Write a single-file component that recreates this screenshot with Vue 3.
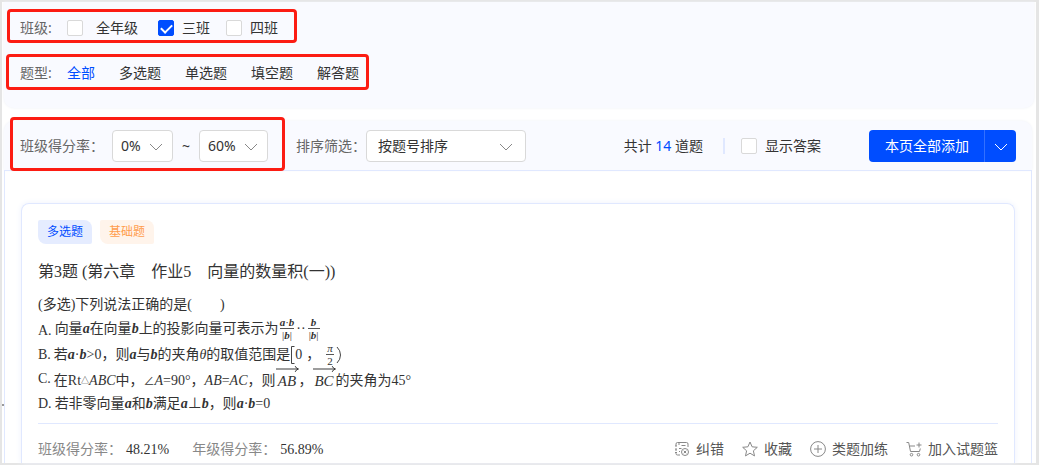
<script setup>
import { ref } from 'vue'

const classes = ref([
  { name: '全年级', checked: false },
  { name: '三班', checked: true },
  { name: '四班', checked: false },
])
const types = ['全部', '多选题', '单选题', '填空题', '解答题']
const activeType = ref('全部')
const minRate = ref('0%')
const maxRate = ref('60%')
const sort = ref('按题号排序')
const showAnswer = ref(false)
</script>

<template>
  <div class="frame">
    <section class="filters">
      <div class="row marked class-row">
        <span class="label">班级:</span>
        <label v-for="c in classes" :key="c.name" class="check">
          <input v-model="c.checked" type="checkbox" />
          <span>{{ c.name }}</span>
        </label>
      </div>
      <div class="row marked type-row">
        <span class="label">题型:</span>
        <button
          v-for="t in types"
          :key="t"
          type="button"
          class="type"
          :class="{ active: t === activeType }"
          @click="activeType = t"
        >{{ t }}</button>
      </div>
    </section>

    <section class="results">
      <div class="toolbar">
        <div class="marked rate-group">
          <label class="label" for="min-rate">班级得分率：</label>
          <span class="select rate-min">
            <select id="min-rate" v-model="minRate"><option>0%</option><option>20%</option></select>
            <svg viewBox="0 0 14 8"><path d="M1 1l6 6 6-6" /></svg>
          </span>
          <span class="tilde">~</span>
          <span class="select rate-max">
            <select v-model="maxRate" aria-label="最高得分率"><option>60%</option><option>80%</option></select>
            <svg viewBox="0 0 14 8"><path d="M1 1l6 6 6-6" /></svg>
          </span>
        </div>
        <label class="label" for="sort">排序筛选：</label>
        <span class="select sort">
          <select id="sort" v-model="sort"><option>按题号排序</option></select>
          <svg viewBox="0 0 14 8"><path d="M1 1l6 6 6-6" /></svg>
        </span>
        <div class="summary">
          <span class="total">共计 <b>14</b> 道题</span>
          <i class="split"></i>
          <label class="check"><input v-model="showAnswer" type="checkbox" /><span>显示答案</span></label>
        </div>
        <div class="add">
          <button type="button" class="add-all">本页全部添加</button>
          <button type="button" class="add-more" aria-label="更多">
            <svg viewBox="0 0 14 8"><path d="M1 1l6 6 6-6" /></svg>
          </button>
        </div>
      </div>

      <div class="list">
        <article class="card">
          <div class="tags">
            <span class="tag blue">多选题</span>
            <span class="tag orange">基础题</span>
          </div>
          <h2>第3题 (第六章　作业5　向量的数量积(一))</h2>
          <div class="question">
            <p class="stem">(多选)下列说法正确的是(　　)</p>
            <div class="option low">
              <span>A.</span>
              <p>向量<b>a</b>在向量<b>b</b>上的投影向量可表示为<span class="frac"><span><b>a</b>·<b>b</b></span><span class="den">|<b>b</b>|</span></span><span class="dots">··</span><span class="frac"><span><b>b</b></span><span class="den">|<b>b</b>|</span></span></p>
            </div>
            <div class="option tall">
              <span>B.</span>
              <p>若<b>a</b>·<b>b</b>&gt;0，则<b>a</b>与<b>b</b>的夹角<i>θ</i>的取值范围是<svg class="fence" viewBox="0 0 5 18"><path d="M4.500 .5H1.500V17.500H4.500" /></svg>0<span class="comma">，</span><span class="frac pi"><i>π</i><span class="den">2</span></span><svg class="fence" viewBox="0 0 5 18"><path d="M1 1Q4.500 4.500 4.500 9Q4.500 13.500 1 17" /></svg></p>
            </div>
            <div class="option high">
              <span>C.</span>
              <p>在Rt<small class="triangle">△</small><i>ABC</i>中，<small>∠</small><i>A</i>=90°，<i>AB</i>=<i>AC</i>，则<span class="vec"><svg viewBox="0 0 24 6"><path d="M0 3h23M20 0q1 2.500 3.500 3q-2.500 .5-3.500 3" /></svg><i>AB</i></span>，<span class="vec"><svg viewBox="0 0 24 6"><path d="M0 3h23M20 0q1 2.500 3.500 3q-2.500 .5-3.500 3" /></svg><i>BC</i></span>的夹角为45°</p>
            </div>
            <div class="option">
              <span>D.</span>
              <p>若非零向量<b>a</b>和<b>b</b>满足<b>a</b>⊥<b>b</b>，则<b>a</b>·<b>b</b>=0</p>
            </div>
          </div>
          <footer>
            <span class="stat">班级得分率：<em>48.21%</em></span>
            <span class="stat">年级得分率：<em>56.89%</em></span>
            <div class="actions">
              <button type="button">
                <svg viewBox="0 0 16 16"><path d="M6 14H3.500Q2 14 2 12.500V11M2 9V7M2 5V3Q2 1.500 3.500 1.500H12.500Q14 1.500 14 3V6M5 1.500V4M7.500 4.500H11.500M5 7.500H7.500M5 10.500H6M1 5H3M1 9H3M1 11.500H3" /><circle cx="11" cy="11" r="3.500" /><path d="M9.700 9.700l2.600 2.600M12.300 9.700l-2.600 2.600" /></svg>
                纠错
              </button>
              <button type="button">
                <svg viewBox="0 0 16 16"><path d="M8 1l2.100 4.800 5.200.5-3.900 3.500 1.100 5.100L8 12.200l-4.500 2.700 1.100-5.100L.7 6.300l5.200-.5z" /></svg>
                收藏
              </button>
              <button type="button">
                <svg viewBox="0 0 16 16"><circle cx="8" cy="8" r="7.400" /><path d="M8 4v8M4 8h8" /></svg>
                类题加练
              </button>
              <button type="button">
                <svg viewBox="0 0 16 16"><path d="M.5 1.500H2.700L4.500 10.500H13.500L14.300 7.500M3.500 5H9M10.500 4H15.500M13 1.500V6.500" /><circle cx="5.500" cy="13.700" r="1.300" /><circle cx="12.500" cy="13.700" r="1.300" /></svg>
                加入试题篮
              </button>
            </div>
          </footer>
        </article>
      </div>
    </section>
    <i class="handle"></i>
  </div>
</template>

<style>
body {
  background: #fff;
}
</style>

<style scoped>
* {
  box-sizing: border-box;
}
.frame {
  position: relative;
  min-height: 100vh;
  display: flex;
  flex-direction: column;
  gap: 13px;
  padding: 0 2px;
  border: 2px solid #e5e5e5;
  border-right-width: 3px;
  color: #333;
  font: 400 14px/20px "Noto Sans", "Noto Sans CJK SC", sans-serif;
}
.handle {
  position: absolute;
  left: 0;
  bottom: 57px;
  width: 2px;
  height: 2px;
  background: #999;
  box-shadow: 0 0 12px #ccc;
}
button,
select {
  font: inherit;
  color: inherit;
  margin: 0;
  border: 0;
  background: none;
}
button {
  padding: 0;
  cursor: pointer;
}
svg {
  fill: none;
  stroke: #888;
}
.label {
  color: #666;
}
.filters {
  display: flex;
  flex-direction: column;
  align-items: flex-start;
  gap: 11px;
  padding: 7px 2px 18px;
  background: #f9faff;
  border-radius: 0 0 10px 10px;
  box-shadow: 0 0 3px #eef0f6;
}
.row {
  display: flex;
  align-items: center;
}
.marked {
  position: relative;
}
.marked::after {
  content: "";
  position: absolute;
  inset: 0;
  border: 3px solid #fc1c13;
  border-radius: 4px;
  pointer-events: none;
}
.class-row {
  height: 34px;
  margin-left: 1px;
  padding: 4px 19px 0 13px;
}
.type-row {
  height: 36px;
  gap: 24px;
  padding: 2px 10px 0 14px;
}
.row .label {
  width: 47px;
}
.type-row .label {
  margin-right: -24px;
}
.check {
  display: flex;
  align-items: center;
  gap: 8px;
}
.class-row .check:nth-child(2) {
  gap: 13px;
  margin-right: 20px;
}
.class-row .check:nth-child(3) {
  margin-right: 16px;
}
.check input {
  appearance: none;
  width: 16px;
  height: 16px;
  margin: 0;
  border: 1px solid #d9d9d9;
  border-radius: 2px;
  background: #fff;
  display: grid;
  place-items: center;
}
.check input:checked {
  border-color: #004dff;
  background: #004dff;
}
.check input:checked::after {
  content: "";
  width: 9px;
  height: 5px;
  border: solid #fff;
  border-width: 0 0 2px 2px;
  transform: translateY(-1px) rotate(-45deg);
}
.type.active,
.total b {
  color: #004dff;
}
.results {
  flex: 1;
  display: flex;
  flex-direction: column;
  margin-right: 2px;
}
.toolbar {
  display: flex;
  align-items: center;
  height: 49px;
  padding: 1px 16px 0 0;
  background: #f9faff;
  border-radius: 10px 10px 0 0;
  box-shadow: 0 0 3px #eef0f6;
}
.rate-group {
  display: flex;
  align-items: center;
  height: 54px;
  margin: 0 11px 4px 6px;
  padding: 4px 17px 0 10px;
}
.rate-group .label {
  margin-right: 8px;
}
.tilde {
  width: 26px;
  text-align: center;
}
.select {
  display: grid;
  align-items: center;
}
.select select,
.select svg {
  grid-area: 1 / 1;
}
.select select {
  appearance: none;
  width: 100%;
  height: 32px;
  padding: 0 8px;
  border: 1px solid #d9d9d9;
  border-radius: 4px;
  background: #fff;
}
.select svg {
  width: 14px;
  height: 8px;
  margin: 2px 10px 0 0;
  justify-self: end;
  pointer-events: none;
}
.rate-min {
  width: 61px;
}
.rate-max {
  width: 69px;
}
.sort {
  width: 160px;
}
.sort select {
  padding: 0 11px;
}
.sort svg {
  margin-right: 13px;
}
.summary {
  display: flex;
  align-items: center;
  margin-left: auto;
}
.total b {
  font-weight: 400;
}
.split {
  width: 2px;
  height: 16px;
  margin: 0 16px 0 20px;
  background: #e0e8ff;
}
.add {
  display: flex;
  height: 32px;
  margin-left: 48px;
  border-radius: 4px;
  background: #004dff;
  color: #fff;
}
.add-all {
  padding: 0 15px 0 16px;
}
.add-more {
  width: 32px;
  border-left: 1px solid #3370ff;
}
.add-more svg {
  width: 14px;
  height: 8px;
  stroke: #fff;
}
.list {
  flex: 1;
  display: flex;
  flex-direction: column;
  padding: 32px 16px 0;
  border: 1px solid #e0e8ff;
  border-bottom: 0;
}
.card {
  flex: 1;
  padding: 16px 16px 0;
  border: 1px solid #e0e8ff;
  border-bottom: 0;
  border-radius: 8px 8px 0 0;
  box-shadow: 0 0 6px #eef2fc;
}
.tags {
  display: flex;
  gap: 8px;
}
.tag {
  padding: 0 9px;
  border-radius: 2px 8px;
  font-size: 12px;
  line-height: 24px;
}
.blue {
  background: #e5ecff;
  color: #004dff;
}
.orange {
  background: #fff4eb;
  color: #ff9d4d;
}
h2 {
  margin: 16px 0 9px;
  font: 400 16px/24px "Liberation Serif", "Noto Sans CJK SC", serif;
}
.question {
  font-family: "Liberation Serif", "Noto Sans CJK SC", serif;
  margin-bottom: 8px;
}
p {
  margin: 0;
}
.stem {
  line-height: 24px;
}
.question b {
  font-weight: 700;
  font-style: italic;
}
.option {
  display: flex;
  align-items: center;
  gap: 3px;
  height: 22px;
}
.option p {
  display: flex;
  align-items: center;
  white-space: pre;
}
.option small {
  font-size: 11px;
}
.option .triangle {
  font-size: 8px;
}
.low {
  height: 24px;
}
.low > span {
  align-self: flex-end;
}
.tall {
  height: 28px;
}
.high {
  height: 24px;
}
.high > span {
  align-self: flex-start;
}
.frac {
  display: inline-flex;
  flex-direction: column;
  align-items: center;
  margin: 0 1px;
  font-size: 11px;
  line-height: 11px;
}
.den {
  align-self: stretch;
  padding: 1px 1px 0;
  border-top: 1px solid #555;
  text-align: center;
}
.dots {
  margin: 0 1px;
}
.comma {
  margin: 0 4px;
}
.fence {
  width: 5px;
  height: 18px;
  stroke: #444;
}
.pi {
  margin: 0 2px;
}
.vec {
  display: inline-grid;
  justify-items: center;
  font-size: 15px;
  line-height: 18px;
  margin-top: -6px;
}
.vec svg {
  width: 23px;
  height: 6px;
  stroke: #333;
}
footer {
  display: flex;
  align-items: center;
  height: 40px;
  padding-top: 10px;
  border-top: 1px solid #e0e8ff;
}
.stat {
  margin-right: 23px;
  color: #888;
}
.stat em {
  margin-left: 4px;
  color: #333;
  font: 14px "Liberation Serif", serif;
}
.actions {
  display: flex;
  gap: 18px;
  margin-left: auto;
  color: #555;
}
.actions button {
  display: flex;
  align-items: center;
  gap: 6px;
}
.actions svg {
  width: 16px;
  height: 16px;
}
</style>
